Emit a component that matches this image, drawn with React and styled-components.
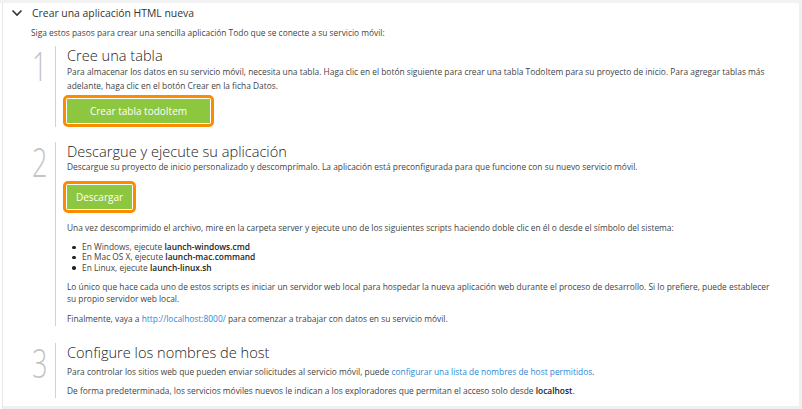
import React from 'react'
import styled, { createGlobalStyle } from 'styled-components'

const GlobalStyle = createGlobalStyle`
  html, body {
    margin: 0;
    padding: 0;
    background: #ffffff;
  }
  body {
    font-family: 'Open Sans', 'Noto Sans', sans-serif;
    color: #444444;
  }
`

const Page = styled.div`
  width: 802px;
  height: 409px;
  box-sizing: border-box;
  border-top: 3px solid #f2f2f2;
  overflow: hidden;
`

const Panel = styled.div`
  margin-left: 2px;
  width: 800px;
  height: 406px;
  box-sizing: border-box;
  border-left: 1px solid #e6e6e6;
  border-right: 3px solid #f0f0f0;
  border-bottom: 3px solid #f0f0f0;
  overflow: hidden;
`

const Header = styled.div`
  display: flex;
  align-items: center;
  height: 20px;
  padding-left: 8px;
  gap: 9px;
  font-size: 10.4px;
  color: #333333;
`

const Intro = styled.p`
  margin: 3px 0 0 28px;
  font-size: 8.4px;
  line-height: 14px;
`

const Steps = styled.div`
  display: flex;
  flex-direction: column;
  margin: 6px 0 0 28px;
`

const Step = styled.div`
  display: flex;
  margin-top: ${p => p.$gap || 0}px;
  padding-bottom: ${p => p.$tail || 0}px;
`

const NumCol = styled.div`
  width: 24px;
  flex: none;
  border-right: 1px solid #d2d2d2;
`

const Digit = styled.div`
  font-size: 41px;
  font-weight: 300;
  line-height: 1;
  color: #c4c4c4;
  margin: -1px 0 0 1px;
  transform: scaleX(0.66);
  transform-origin: left top;
`

const Body = styled.div`
  flex: 1;
  padding: 0 20px 0 11px;
`

const Title = styled.h2`
  margin: 0;
  font-size: 14.6px;
  font-weight: 300;
  line-height: 18px;
  color: #222222;
`

const Text = styled.p`
  margin: ${p => p.$top || 0}px 0 0;
  font-size: 8.4px;
  line-height: ${p => p.$lh || 14}px;
`

const Strong = styled.b`
  font-weight: 600;
  color: #222222;
`

const Link = styled.a`
  color: #2b88d8;
  text-decoration: none;
`

const Outline = styled.div`
  display: inline-block;
  margin: ${p => p.$top || 0}px 0 0 -4px;
  padding: 1px;
  border: 3px solid #fb8c00;
  border-radius: 5px;
  background: #ffffff;
  line-height: 0;
`

const GreenButton = styled.button`
  width: ${p => p.$width}px;
  height: 24px;
  padding: 0;
  border: none;
  background: #8dc63f;
  color: #ffffff;
  font-family: 'Open Sans', 'Noto Sans', sans-serif;
  font-size: 10px;
  line-height: 24px;
  cursor: pointer;
`

const List = styled.ul`
  margin: 7px 0 0;
  padding: 0;
  list-style: none;
  font-size: 8.4px;
  line-height: 10.4px;
`

const Item = styled.li`
  position: relative;
  padding-left: 15px;
  &::before {
    content: '';
    position: absolute;
    left: 5px;
    top: 3.5px;
    width: 3.5px;
    height: 3.5px;
    border-radius: 50%;
    background: #222222;
  }
`

const Chevron = () => (
  <svg width="12" height="8" viewBox="0 0 12 8">
    <polyline points="1.5,1.5 6,6 10.5,1.5" fill="none" stroke="#333" strokeWidth="1.6" />
  </svg>
)

function App() {
  return (
    <>
      <GlobalStyle />
      <Page>
        <Panel>
          <Header>
            <Chevron />
            <span>Crear una aplicación HTML nueva</span>
          </Header>
          <Intro>Siga estos pasos para crear una sencilla aplicación Todo que se conecte a su servicio móvil:</Intro>
          <Steps>
            <Step>
              <NumCol><Digit>1</Digit></NumCol>
              <Body>
                <Title>Cree una tabla</Title>
                <Text $top={1}>
                  Para almacenar los datos en su servicio móvil, necesita una tabla. Haga clic en el botón siguiente para crear una tabla TodoItem para su proyecto de inicio. Para agregar tablas más adelante, haga clic en el botón Crear en la ficha Datos.
                </Text>
                <Outline $top={2}>
                  <GreenButton $width={143}>Crear tabla todoItem</GreenButton>
                </Outline>
              </Body>
            </Step>
            <Step $gap={15}>
              <NumCol><Digit>2</Digit></NumCol>
              <Body>
                <Title>Descargue y ejecute su aplicación</Title>
                <Text>
                  Descargue su proyecto de inicio personalizado y descomprímalo. La aplicación está preconfigurada para que funcione con su nuevo servicio móvil.
                </Text>
                <Outline $top={7}>
                  <GreenButton $width={65}>Descargar</GreenButton>
                </Outline>
                <Text $top={8}>
                  Una vez descomprimido el archivo, mire en la carpeta server y ejecute uno de los siguientes scripts haciendo doble clic en él o desde el símbolo del sistema:
                </Text>
                <List>
                  <Item>En Windows, ejecute <Strong>launch-windows.cmd</Strong></Item>
                  <Item>En Mac OS X, ejecute <Strong>launch-mac.command</Strong></Item>
                  <Item>En Linux, ejecute <Strong>launch-linux.sh</Strong></Item>
                </List>
                <Text $top={8} $lh={11.4}>
                  Lo único que hace cada uno de estos scripts es iniciar un servidor web local para hospedar la nueva aplicación web durante el proceso de desarrollo. Si lo prefiere, puede establecer su propio servidor web local.
                </Text>
                <Text $top={8}>
                  Finalmente, vaya a <Link href="#">http://localhost:8000/</Link> para comenzar a trabajar con datos en su servicio móvil.
                </Text>
              </Body>
            </Step>
            <Step $gap={17} $tail={30}>
              <NumCol><Digit>3</Digit></NumCol>
              <Body>
                <Title>Configure los nombres de host</Title>
                <Text $top={4}>
                  Para controlar los sitios web que pueden enviar solicitudes al servicio móvil, puede <Link href="#">configurar una lista de nombres de host permitidos</Link>.
                </Text>
                <Text $top={5}>
                  De forma predeterminada, los servicios móviles nuevos le indican a los exploradores que permitan el acceso solo desde <Strong>localhost</Strong>.
                </Text>
              </Body>
            </Step>
          </Steps>
        </Panel>
      </Page>
    </>
  )
}

export default App
